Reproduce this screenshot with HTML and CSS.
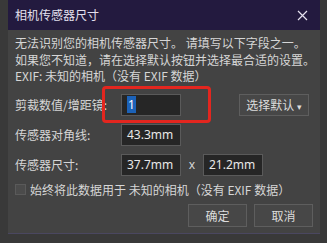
FILE: index.html
```html
<!DOCTYPE html>
<html lang="zh">
<head>
    <meta charset="UTF-8">
    <title>相机传感器尺寸</title>
    <link rel="stylesheet" href="styles.css">
</head>
<body>
    <div class="dialog">
        <div class="titlebar">
            <span class="title">相机传感器尺寸</span>
            <svg class="close" width="11" height="11" viewBox="0 0 11 11">
                <path d="M1 1 L10 10 M10 1 L1 10" stroke="#e6e2f0" stroke-width="1.2" fill="none"/>
            </svg>
        </div>

        <div class="content">
            <div class="msg">无法识别您的相机传感器尺寸。 请填写以下字段之一。</div>
            <div class="msg">如果您不知道，请在选择默认按钮并选择最合适的设置。</div>
            <div class="msg">EXIF: 未知的相机（没有 EXIF 数据）</div>

            <div class="row first">
                <span class="label">剪裁数值/增距镜:</span>
                <div class="field"><span class="sel">1</span></div>
                <span class="spacer"></span>
                <button class="drop">选择默认 <span class="arrow">▾</span></button>
                <!-- annotation box -->
                <div class="mark"></div>
            </div>
            <div class="row">
                <span class="label">传感器对角线:</span>
                <div class="field">43.3mm</div>
            </div>
            <div class="row">
                <span class="label">传感器尺寸:</span>
                <div class="field">37.7mm</div>
                <span class="times">x</span>
                <div class="field">21.2mm</div>
            </div>

            <div class="check">
                <span class="box"></span>
                <span>始终将此数据用于 未知的相机（没有 EXIF 数据）</span>
            </div>

            <div class="buttons">
                <button class="btn">确定</button>
                <button class="btn">取消</button>
            </div>
        </div>
    </div>
</body>
</html>
```

FILE: styles.css
```css
body {
    margin: 0;
    padding: 0;
    background-color: #393939;
    font-family: "Noto Sans CJK SC", "Noto Sans", sans-serif;
    font-size: 12px;
    line-height: 16px;
    color: #d6d6d6;
}
.dialog {
    width: 312px;
    height: 234px;
    margin-left: 8px;
    background-color: #434343;
    border-bottom: 1px solid #4a4760;
    box-sizing: border-box;
    overflow: hidden;
}
.titlebar {
    height: 30px;
    background-color: #231a3f;
    display: flex;
    align-items: center;
    justify-content: space-between;
    padding: 0 12px 0 7px;
}
.title {
    color: #e4e0ee;
    font-size: 12px;
}
.content {
    padding: 5px 7px 0 7px;
}
.msg {
    height: 16.5px;
    white-space: nowrap;
    overflow: visible;
}
.row {
    position: relative;
    display: flex;
    align-items: center;
    height: 22px;
    margin-top: 8px;
}
.row.first {
    margin-top: 9px;
}
.label {
    width: 106px;
    white-space: nowrap;
}
.field {
    width: 60px;
    height: 22px;
    box-sizing: border-box;
    background-color: #262626;
    border: 1px solid #5a5a5a;
    color: #e8e8e8;
    font-family: "Noto Sans", sans-serif;
    padding: 0 5px;
    line-height: 20px;
}
.sel {
    background-color: #1c62b8;
    color: #fff;
    padding: 0 1px;
}
.spacer {
    flex: 1;
}
.drop {
    width: 70px;
    height: 22px;
    margin-right: 4px;
    background-color: #474747;
    border: 1px solid #5e5e5e;
    color: #dcdcdc;
    font-family: inherit;
    font-size: 12px;
    padding: 0;
}
.arrow {
    font-size: 9px;
}
.mark {
    position: absolute;
    left: 87px;
    top: -8px;
    width: 109px;
    height: 37px;
    box-sizing: border-box;
    border: 3px solid #e3261f;
    border-radius: 4px;
}
.times {
    width: 22px;
    text-align: center;
    font-family: "Noto Sans", sans-serif;
}
.check {
    display: flex;
    align-items: center;
    height: 16px;
    margin-top: 6px;
    white-space: nowrap;
}
.box {
    width: 11px;
    height: 11px;
    box-sizing: border-box;
    background-color: #4b4b4b;
    border: 1px solid #5a5a5a;
    margin-right: 4px;
}
.buttons {
    display: flex;
    justify-content: flex-end;
    gap: 7px;
    margin-top: 6px;
}
.btn {
    width: 59px;
    height: 23px;
    background-color: #474747;
    border: 1px solid #5e5e5e;
    color: #dcdcdc;
    font-family: inherit;
    font-size: 12px;
    padding: 0;
}
```
